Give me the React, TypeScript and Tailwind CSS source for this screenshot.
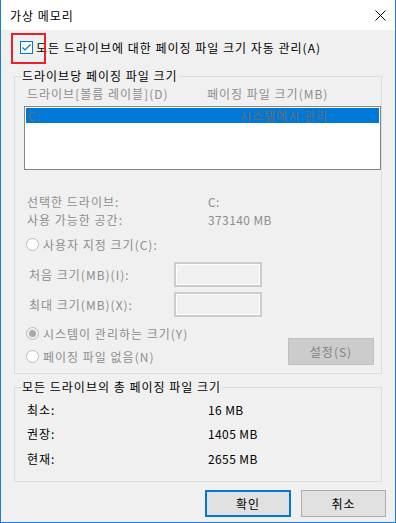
import React from "react";

const dis = "text-[#8d8d8d]";

function Radio({ checked, white }: { checked?: boolean; white?: boolean }) {
  return (
    <span
      className={`flex h-[13px] w-[13px] shrink-0 items-center justify-center rounded-full border border-[#bcbcbc] ${
        white ? "bg-white" : "bg-[#f0f0f0]"
      }`}
    >
      {checked && <span className="h-[7px] w-[7px] rounded-full bg-[#a9a9a9]" />}
    </span>
  );
}

function Group({ title, h, children }: { title: string; h: string; children: React.ReactNode }) {
  return (
    <div className={`relative w-[368px] border border-[#dcdcdc] ${h}`}>
      <span className="absolute -top-[9px] left-[6px] bg-[#f0f0f0] px-[1px] leading-[15px] text-black">
        {title}
      </span>
      {children}
    </div>
  );
}

const num = "tracking-[0.4px]";

export default function App() {
  return (
    <div
      className="relative flex h-[523px] w-[396px] flex-col border-x border-b border-[#1a7fd6] bg-[#f0f0f0] text-[12px] tracking-[1px] text-black"
      style={{ fontFamily: '"Noto Sans CJK KR", "Noto Sans", sans-serif' }}
    >
      {/* title bar */}
      <div className="flex h-[30px] shrink-0 items-center justify-between bg-white pl-[9px] pr-[9px]">
        <span className="leading-[15px]">가상 메모리</span>
        <svg width="11" height="11" viewBox="0 0 11 11" className="mt-[1px]">
          <path d="M0.5 0.5 L10.5 10.5 M10.5 0.5 L0.5 10.5" stroke="#000" strokeWidth="1" fill="none" />
        </svg>
      </div>

      <div className="flex flex-1 flex-col pl-[13px]">
        {/* checkbox row */}
        <div className="mt-[11px] flex h-[13px] items-center pl-[6px]">
          <span className="flex h-[13px] w-[13px] shrink-0 items-center justify-center border border-[#0078d7] bg-white">
            <svg width="11" height="11" viewBox="0 0 11 11">
              <path d="M1.5 5.5 L4 8 L9.5 2.5" stroke="#0078d7" strokeWidth="1.2" fill="none" />
            </svg>
          </span>
          <span className="ml-[3px] leading-[15px]">모든 드라이브에 대한 페이징 파일 크기 자동 관리(A)</span>
        </div>

        {/* group 1 */}
        <div className="mt-[22px]">
          <Group title="드라이브당 페이징 파일 크기" h="h-[298px]">
            <div className={`mt-[9px] flex pl-[12px] leading-[15px] ${dis}`}>
              <span className="w-[180px]">드라이브[볼륨 레이블](D)</span>
              <span>페이징 파일 크기(MB)</span>
            </div>
            <div className="ml-[9px] mt-[5px] h-[64px] w-[357px] border border-[#828790] bg-white p-[1px]">
              <div className="flex h-[15px] items-center bg-[#0078d7] pl-[2px] leading-[15px] text-[#6d6d6d]">
                <span className="w-[212px]">C:</span>
                <span>시스템에서 관리</span>
              </div>
            </div>
            <div className={`mt-[23px] flex h-[18px] items-center pl-[12px] ${dis}`}>
              <span className="w-[181px]">선택한 드라이브:</span>
              <span className={num}>C:</span>
            </div>
            <div className={`flex h-[18px] items-center pl-[12px] ${dis}`}>
              <span className="w-[181px]">사용 가능한 공간:</span>
              <span className={num}>373140 MB</span>
            </div>
            <div className="mt-[7px] flex h-[16px] items-center pl-[11px]">
              <Radio white />
              <span className={`ml-[4px] leading-[15px] ${dis}`}>사용자 지정 크기(C):</span>
            </div>
            <div className="mt-[10px] flex h-[25px] items-center pl-[14px]">
              <span className={`w-[145px] leading-[15px] ${dis}`}>처음 크기(MB)(I):</span>
              <span className="h-[25px] w-[88px] border-2 border-[#cccccc] bg-[#f0f0f0] shadow-[inset_0_0_0_1px_#ffffff]" />
            </div>
            <div className="mt-[5px] flex h-[25px] items-center pl-[14px]">
              <span className={`w-[145px] leading-[15px] ${dis}`}>최대 크기(MB)(X):</span>
              <span className="h-[25px] w-[88px] border-2 border-[#cccccc] bg-[#f0f0f0] shadow-[inset_0_0_0_1px_#ffffff]" />
            </div>
            <div className="mt-[8px] flex items-start">
              <div className="flex flex-col pl-[11px]">
                <div className="flex h-[16px] items-center">
                  <Radio checked />
                  <span className={`ml-[4px] leading-[15px] ${dis}`}>시스템이 관리하는 크기(Y)</span>
                </div>
                <div className="mt-[7px] flex h-[16px] items-center">
                  <Radio white />
                  <span className={`ml-[4px] leading-[15px] ${dis}`}>페이징 파일 없음(N)</span>
                </div>
              </div>
              <div className="ml-auto mr-[7px] mt-[13px] flex h-[27px] w-[86px] items-center justify-center border border-[#bfbfbf] bg-[#cccccc] leading-[15px] text-[#838383]">
                설정(S)
              </div>
            </div>
          </Group>
        </div>

        {/* group 2 */}
        <div className="mt-[13px]">
          <Group title="모든 드라이브의 총 페이징 파일 크기" h="h-[95px]">
            <div className="mt-[14px] flex h-[16px] items-center pl-[12px]">
              <span className="w-[181px]">최소:</span>
              <span className={num}>16 MB</span>
            </div>
            <div className="mt-[8px] flex h-[16px] items-center pl-[12px]">
              <span className="w-[181px]">권장:</span>
              <span className={num}>1405 MB</span>
            </div>
            <div className="mt-[9px] flex h-[16px] items-center pl-[12px]">
              <span className="w-[181px]">현재:</span>
              <span className={num}>2655 MB</span>
            </div>
          </Group>
        </div>

        {/* buttons */}
        <div className="mt-[8px] flex justify-end gap-[10px] pr-[9px]">
          <div className="flex h-[27px] w-[86px] items-center justify-center border-2 border-[#0078d7] bg-[#e1e1e1] leading-[15px]">
            확인
          </div>
          <div className="flex h-[27px] w-[85px] items-center justify-center border border-[#adadad] bg-[#e1e1e1] leading-[15px]">
            취소
          </div>
        </div>
      </div>

      {/* annotation highlight */}
      <div className="pointer-events-none absolute left-[10px] top-[33px] h-[31px] w-[35px] border-2 border-[#e3242b]" />
    </div>
  );
}
